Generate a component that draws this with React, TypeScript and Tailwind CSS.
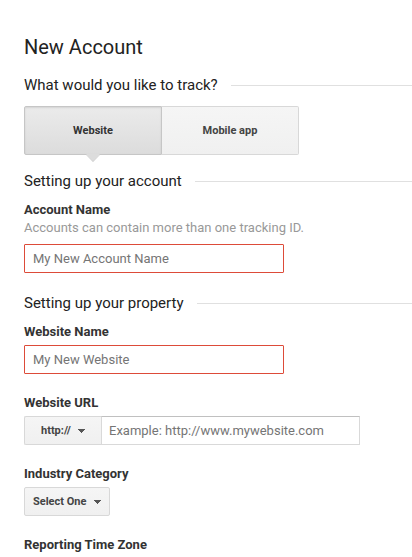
import { useState } from "react";
import type { ReactNode } from "react";

function Section({ title, children }: { title: string; children?: ReactNode }) {
  return (
    <section>
      <div className="mb-2.5 flex items-center">
        <h2 className="mr-[13px] text-[15px] leading-5 text-[#222]">{title}</h2>
        <div className="h-px flex-1 bg-[#e0e0e0]" />
      </div>
      {children}
    </section>
  );
}

function Label({ id, children }: { id: string; children: ReactNode }) {
  return (
    <label htmlFor={id} className="block text-[13px] leading-[18px] font-bold text-[#333]">
      {children}
    </label>
  );
}

function RequiredInput({ id, placeholder }: { id: string; placeholder: string }) {
  return (
    <input
      id={id}
      type="text"
      placeholder={placeholder}
      className="block h-[29px] w-full max-w-[260px] rounded-[1px] border border-[#dd4b39] bg-white px-2 text-[13px] text-[#333] outline-none placeholder:text-[#757575]"
    />
  );
}

function Caret({ className }: { className: string }) {
  return (
    <svg
      viewBox="0 0 7 4"
      shapeRendering="crispEdges"
      className={`pointer-events-none absolute inset-y-0 my-auto h-1 w-[7px] fill-[#555] ${className}`}
      aria-hidden="true"
    >
      <path d="M0 0h7v1H0zM1 1h5v1H1zM2 2h3v1H2zM3 3h1v1H3z" />
    </svg>
  );
}

export default function App() {
  const [kind, setKind] = useState<"web" | "app">("web");
  const tab = "relative h-[49px] pt-0.5 text-[11px] font-bold border";
  const on = "border-[#c6c6c6] bg-linear-to-b from-[#ebebeb] to-[#dcdcdc] text-[#333] shadow-[inset_0_1px_2px_rgba(0,0,0,0.1)]";
  const off = "border-[#d8d8d8] bg-linear-to-b from-[#f5f5f5] to-[#f0f0f0] text-[#444]";
  const pointer = (
    <svg viewBox="0 0 14 8" className="absolute top-full left-1/2 h-2 w-3.5 -translate-x-1/2" aria-hidden="true">
      <path d="M0 0h14L7 8z" fill="#dcdcdc" />
      <path d="M0 .5 7 7.6 14 .5" fill="none" stroke="#cfcfcf" strokeWidth="0.8" />
    </svg>
  );

  return (
    <main className="bg-white pt-[35px] pl-6 font-[Roboto,sans-serif]">
      <h1 className="mb-4 text-xl leading-6 text-[#222]">New Account</h1>
      <form className="flex flex-col gap-5">
        <div className="flex flex-col gap-4">
          <Section title="What would you like to track?">
            <div className="mt-[11px] flex">
              <button
                type="button"
                aria-pressed={kind === "web"}
                onClick={() => setKind("web")}
                className={`${tab} w-[138px] rounded-l-xs ${kind === "web" ? on : off}`}
              >
                Website
                {kind === "web" && pointer}
              </button>
              <button
                type="button"
                aria-pressed={kind === "app"}
                onClick={() => setKind("app")}
                className={`${tab} w-[137px] rounded-r-xs border-l-0 ${kind === "app" ? on : off}`}
              >
                Mobile app
                {kind === "app" && pointer}
              </button>
            </div>
          </Section>
          <Section title="Setting up your account">
            <Label id="account">Account Name</Label>
            <p className="mb-[7px] text-[13px] leading-[18px] text-[#999]">
              Accounts can contain more than one tracking ID.
            </p>
            <RequiredInput id="account" placeholder="My New Account Name" />
          </Section>
        </div>
        <Section title="Setting up your property">
          <div className="flex flex-col gap-5">
            <div className="flex flex-col gap-1">
              <Label id="site">Website Name</Label>
              <RequiredInput id="site" placeholder="My New Website" />
            </div>
            <div className="flex flex-col gap-1">
              <Label id="url">Website URL</Label>
              <div className="mr-6 flex max-w-[336px]">
                <div className="relative">
                  <select
                    aria-label="Protocol"
                    className="block h-[29px] w-[77px] appearance-none rounded-l-xs border border-r-0 border-[#d8d8d8] bg-linear-to-b from-[#f5f5f5] to-[#f0f0f0] pt-0.5 pl-4 text-[11px] font-bold text-[#444] outline-none"
                  >
                    <option>http://</option>
                    <option>https://</option>
                  </select>
                  <Caret className="right-4" />
                </div>
                <input
                  id="url"
                  type="text"
                  placeholder="Example: http://www.mywebsite.com"
                  className="h-[29px] min-w-0 flex-1 border border-[#d9d9d9] border-t-[#c0c0c0] bg-white px-[7px] text-[13px] text-[#333] outline-none placeholder:text-[#757575]"
                />
              </div>
            </div>
            <div className="flex flex-col gap-1">
              <Label id="industry">Industry Category</Label>
              <div className="relative self-start">
                <select
                  id="industry"
                  className="block h-[29px] w-[86px] appearance-none rounded-xs border border-[#d8d8d8] bg-linear-to-b from-[#f5f5f5] to-[#f0f0f0] pt-0.5 pl-2 text-[11px] font-bold text-[#444] outline-none"
                >
                  <option>Select One</option>
                </select>
                <Caret className="right-[9px]" />
              </div>
            </div>
            <h3 className="text-[13px] leading-[18px] font-bold text-[#333]">Reporting Time Zone</h3>
          </div>
        </Section>
      </form>
    </main>
  );
}
